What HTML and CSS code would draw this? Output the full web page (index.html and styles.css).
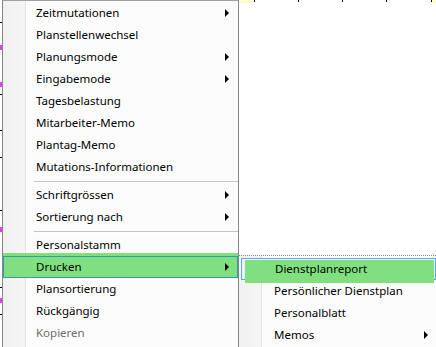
FILE: index.html
```html
<!DOCTYPE html>
<html>
<head>
<meta charset="utf-8">
<link rel="stylesheet" href="styles.css">
</head>
<body>
<div class="stage">
  <div class="marks">
    <span class="tick top" style="left:254px"></span>
    <span class="tick top" style="left:298px"></span>
    <span class="tick top" style="left:342px"></span>
    <span class="tick top" style="left:386px"></span>
    <span class="tick top" style="left:431px"></span>
    <span class="patch yellow" style="left:239px;width:13px"></span>
    <span class="patch yellow" style="left:432px;width:4px"></span>
    <span class="tick side" style="top:22px"></span>
    <span class="tick side" style="top:94px"></span>
    <span class="tick side" style="top:130px"></span>
    <span class="tick side" style="top:157px"></span>
    <span class="tick side" style="top:210px"></span>
    <span class="tick side" style="top:287px"></span>
    <span class="tick side" style="top:314px"></span>
    <span class="mag" style="top:45px"></span>
    <span class="mag" style="top:82px"></span>
    <span class="mag" style="top:227px"></span>
    <span class="mag" style="top:298px"></span>
  </div>

  <div class="menu main">
    <div class="item">Zeitmutationen<i class="arrow"></i></div>
    <div class="item">Planstellenwechsel</div>
    <div class="item">Planungsmode<i class="arrow"></i></div>
    <div class="item">Eingabemode<i class="arrow"></i></div>
    <div class="item">Tagesbelastung</div>
    <div class="item">Mitarbeiter-Memo</div>
    <div class="item">Plantag-Memo</div>
    <div class="item">Mutations-Informationen</div>
    <div class="sep"></div>
    <div class="item">Schriftgrössen<i class="arrow"></i></div>
    <div class="item">Sortierung nach<i class="arrow"></i></div>
    <div class="sep"></div>
    <div class="item">Personalstamm</div>
    <div class="item active">Drucken<i class="arrow"></i></div>
    <div class="item">Plansortierung</div>
    <div class="item">Rückgängig</div>
    <div class="item disabled">Kopieren</div>
  </div>

  <div class="menu sub">
    <div class="item hot">Dienstplanreport</div>
    <div class="item">Persönlicher Dienstplan</div>
    <div class="item">Personalblatt</div>
    <div class="item">Memos<i class="arrow"></i></div>
  </div>
</div>
</body>
</html>
```

FILE: styles.css
```css
html, body {
  margin: 0;
  padding: 0;
  background: #ffffff;
  overflow: hidden;
}

.stage {
  position: relative;
  width: 436px;
  height: 347px;
  overflow: hidden;
  font-family: "Noto Sans", "Open Sans", sans-serif;
  font-size: 11.5px;
  color: #000;
}

.marks .tick {
  position: absolute;
  background: #000;
}
.marks .tick.top {
  top: 0;
  width: 1px;
  height: 2px;
}
.marks .tick.side {
  left: 0;
  width: 2px;
  height: 1px;
}
.marks .patch {
  position: absolute;
  top: 0;
  height: 3px;
}
.marks .yellow {
  background: #ffffc8;
}
.marks .mag {
  position: absolute;
  left: 0;
  width: 2px;
  height: 5px;
  background: #e040f0;
}

.menu {
  background: #fcfcfc;
  box-sizing: border-box;
}

.menu.main {
  margin-left: 2px;
  width: 237px;
  height: 400px;
  border-left: 1px solid #868686;
  border-right: 1px solid #868686;
  border-top: 1px solid #a0a0a0;
  padding-top: 1px;
  background: linear-gradient(to right, #f1f1f1 0, #f5f5f5 22px, #e3e3e3 22px, #e3e3e3 23px, #ffffff 23px, #ffffff 24px, #fcfcfc 24px);
}

.menu.sub {
  position: absolute;
  left: 238px;
  top: 255px;
  width: 200px;
  height: 120px;
  border-left: 1px solid #868686;
  border-top: 1px dotted #8a8a8a;
  padding: 2px 2px 0 2px;
  background: linear-gradient(to right, #f1f1f1 0, #f5f5f5 22px, #e3e3e3 22px, #e3e3e3 23px, #ffffff 23px, #ffffff 24px, #fcfcfc 24px);
}

.item {
  height: 22px;
  line-height: 22px;
  display: flex;
  align-items: center;
  padding-left: 33px;
  padding-right: 9px;
  box-sizing: border-box;
  white-space: nowrap;
}

.menu.sub .item {
  padding-left: 33px;
  padding-right: 8px;
}

.arrow {
  margin-left: auto;
  width: 0;
  height: 0;
  border-left: 4px solid #000;
  border-top: 4px solid transparent;
  border-bottom: 4px solid transparent;
}

.item.active {
  background: #80e080;
  border: 1px solid #2f9ab0;
  padding-left: 32px;
  padding-right: 8px;
  box-shadow: 0 -3px 0 0 #80e080;
}

.item.hot {
  position: relative;
  z-index: 0;
  border: 1px solid #5aa8f0;
  background: #eaf3fc;
  padding-left: 32px;
}
.item.hot::before {
  content: "";
  position: absolute;
  left: 3px;
  top: 1px;
  right: 1px;
  bottom: -4px;
  background: #80e080;
  z-index: -1;
}

.item.disabled {
  color: #6d6d6d;
}

.sep {
  height: 6px;
  margin-left: 31px;
  background: linear-gradient(to bottom, transparent 3px, #c5c5c5 3px, #c5c5c5 4px, #ffffff 4px, #ffffff 5px, transparent 5px);
}
```
